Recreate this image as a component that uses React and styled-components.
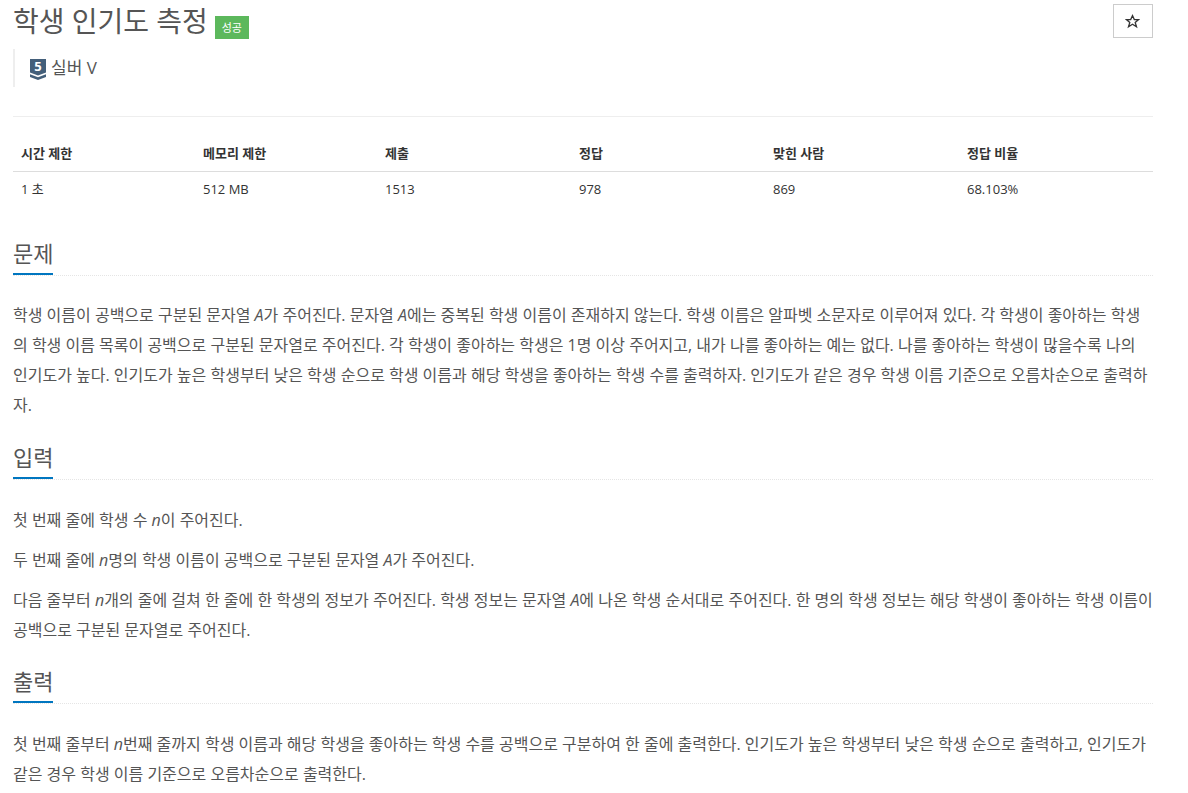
import styled, { createGlobalStyle } from 'styled-components';

const GlobalStyle = createGlobalStyle`
body {
  margin: 0;
  background: #fff;
  color: #333;
  font-family: "Open Sans", "Noto Sans CJK KR", sans-serif;
  font-size: 14px;
}
`;
const Page = styled.div`
  width: 1140px;
  margin-left: 13px;
`;
const TitleRow = styled.div`
  display: flex;
  align-items: flex-start;
  justify-content: space-between;
  height: 49px;
`;
const Title = styled.h1`
  display: flex;
  align-items: center;
  gap: 7px;
  margin: 0;
  height: 42px;
  font-size: 28px;
  font-weight: 400;
  color: #555;
  line-height: 42px;
`;
const Badge = styled.span`
  margin-top: 13px;
  background: #5cb85c;
  color: #fff;
  font-size: 11px;
  line-height: 23px;
  height: 23px;
  width: 34px;
  text-align: center;
`;
const StarButton = styled.button`
  display: flex;
  align-items: center;
  justify-content: center;
  width: 40px;
  height: 34px;
  margin-top: 4px;
  padding: 0 2px 0 0;
  border: 1px solid #ccc;
  background: #fff;
  color: #333;
`;
const Tier = styled.blockquote`
  display: flex;
  align-items: center;
  gap: 5px;
  margin: 0;
  height: 38px;
  padding-left: 15px;
  border-left: 2px solid #eee;
  font-size: 17px;
  line-height: 34px;
  color: #555;
`;
const TierSvg = styled.svg`
  margin-top: 2px;
  overflow: visible;
`;
const Divider = styled.hr`
  margin: 29px 0 0;
  border: 0;
  border-top: 1px solid #eee;
`;
const Stats = styled.table`
  width: 100%;
  margin-top: 18px;
  border-collapse: collapse;
  table-layout: fixed;
  font-size: 13px;
  color: #333;
`;
const Th = styled.th`
  box-sizing: border-box;
  width: ${(p) => p.$w}px;
  height: 36px;
  padding: 0 8px;
  text-align: left;
  font-weight: 700;
  border-bottom: 1px solid #ddd;
`;
const Td = styled.td`
  height: 34px;
  padding: 0 8px 2px;
`;
const Section = styled.section`
  margin-top: ${(p) => p.$top}px;
  p:first-of-type {
    margin-top: ${(p) => p.$gap}px;
  }
`;
const Heading = styled.div`
  height: 40px;
  border-bottom: 1px dotted #e5e5e5;
`;
const HeadingText = styled.h2`
  display: inline-block;
  height: 38px;
  margin: 0;
  font-size: 22px;
  font-weight: 400;
  line-height: 36px;
  color: #555;
  border-bottom: 2px solid #0076c0;
`;
const Para = styled.p`
  margin: 0 0 10px;
  line-height: 30px;
  color: #555;
  font-size: 16px;
`;
const Var = styled.i`
  font-style: italic;
`;

function TierIcon() {
  return (
    <TierSvg width="16" height="21" viewBox="0 0 16 21">
      <path d="M0 0h16v13.5l-8 3-8-3z" fill="#435f7a" />
      <path d="M0 15.2l8 3 8-3V18l-8 3-8-3z" fill="#435f7a" />
      <text x="8" y="12" textAnchor="middle" fontSize="13" fontWeight="700" fill="#fff" fontFamily="'Open Sans', sans-serif">5</text>
    </TierSvg>
  );
}

function StarIcon() {
  return (
    <svg width="15" height="15" viewBox="0 0 15 15">
      <path d="M7.5 1.6l1.8 4h4.3l-3.4 2.8 1.3 4.4-4-2.5-4 2.5 1.3-4.4L1.4 5.6h4.3z" fill="none" stroke="#333" strokeWidth="1.3" strokeLinejoin="miter" />
    </svg>
  );
}

const columns = [
  ['시간 제한', '1 초', 182],
  ['메모리 제한', '512 MB', 182],
  ['제출', '1513', 194],
  ['정답', '978', 194],
  ['맞힌 사람', '869', 194],
  ['정답 비율', '68.103%', 194],
];

export default function App() {
  return (
    <Page>
      <GlobalStyle />
      <TitleRow>
        <Title>학생 인기도 측정 <Badge>성공</Badge></Title>
        <StarButton aria-label="star"><StarIcon /></StarButton>
      </TitleRow>
      <Tier><TierIcon />실버 V</Tier>
      <Divider />
      <Stats>
        <thead>
          <tr>{columns.map((c) => <Th key={c[0]} $w={c[2]}>{c[0]}</Th>)}</tr>
        </thead>
        <tbody>
          <tr>{columns.map((c) => <Td key={c[0]}>{c[1]}</Td>)}</tr>
        </tbody>
      </Stats>
      <Section $top={27} $gap={24}>
        <Heading><HeadingText>문제</HeadingText></Heading>
        <Para>
          학생 이름이 공백으로 구분된 문자열 <Var>A</Var>가 주어진다. 문자열 <Var>A</Var>에는 중복된 학생 이름이 존재하지 않는다. 학생 이름은 알파벳 소문자로 이루어져 있다. 각 학생이 좋아하는 학생의 학생 이름 목록이 공백으로 구분된 문자열로 주어진다. 각 학생이 좋아하는 학생은 1명 이상 주어지고, 내가 나를 좋아하는 예는 없다. 나를 좋아하는 학생이 많을수록 나의 인기도가 높다. 인기도가 높은 학생부터 낮은 학생 순으로 학생 이름과 해당 학생을 좋아하는 학생 수를 출력하자. 인기도가 같은 경우 학생 이름 기준으로 오름차순으로 출력하자.
        </Para>
      </Section>
      <Section $top={19} $gap={25}>
        <Heading><HeadingText>입력</HeadingText></Heading>
        <Para>첫 번째 줄에 학생 수 <Var>n</Var>이 주어진다.</Para>
        <Para>두 번째 줄에 <Var>n</Var>명의 학생 이름이 공백으로 구분된 문자열 <Var>A</Var>가 주어진다.</Para>
        <Para>다음 줄부터 <Var>n</Var>개의 줄에 걸쳐 한 줄에 한 학생의 정보가 주어진다. 학생 정보는 문자열 <Var>A</Var>에 나온 학생 순서대로 주어진다. 한 명의 학생 정보는 해당 학생이 좋아하는 학생 이름이 공백으로 구분된 문자열로 주어진다.</Para>
      </Section>
      <Section $top={18} $gap={25}>
        <Heading><HeadingText>출력</HeadingText></Heading>
        <Para>첫 번째 줄부터 <Var>n</Var>번째 줄까지 학생 이름과 해당 학생을 좋아하는 학생 수를 공백으로 구분하여 한 줄에 출력한다. 인기도가 높은 학생부터 낮은 학생 순으로 출력하고, 인기도가 같은 경우 학생 이름 기준으로 오름차순으로 출력한다.</Para>
      </Section>
    </Page>
  );
}
